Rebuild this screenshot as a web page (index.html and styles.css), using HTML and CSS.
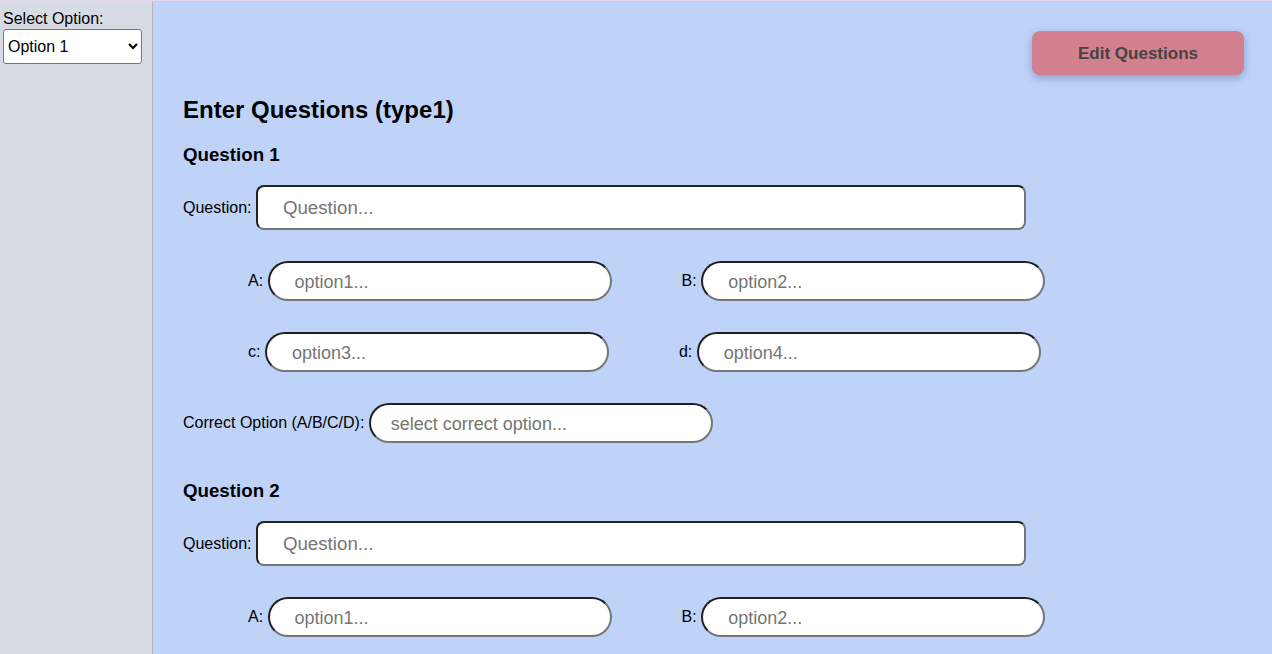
FILE: index.html
```html
<!DOCTYPE html>
<html>
<head>
<meta charset="utf-8">
<title>Questions</title>
<link rel="stylesheet" href="styles.css">
</head>
<body>
<div class="app">
  <aside class="sidebar">
    <label class="side-label" for="opt">Select Option:</label>
    <select id="opt" class="side-select">
      <option>Option 1</option>
      <option>Option 2</option>
    </select>
  </aside>
  <main class="main">
    <div class="toolbar">
      <button class="edit-btn">Edit Questions</button>
    </div>
    <h2 class="title">Enter Questions (type1)</h2>

    <section class="qblock">
      <h3 class="qhead">Question 1</h3>
      <div class="qrow"><label>Question:</label> <input class="qinput" placeholder="Question..."></div>
      <div class="orow">
        <div class="ogroup"><label>A:</label> <input class="oinput" placeholder="option1..."></div>
        <div class="ogroup"><label>B:</label> <input class="oinput" placeholder="option2..."></div>
      </div>
      <div class="orow">
        <div class="ogroup"><label>c:</label> <input class="oinput" placeholder="option3..."></div>
        <div class="ogroup"><label>d:</label> <input class="oinput" placeholder="option4..."></div>
      </div>
      <div class="crow"><label>Correct Option (A/B/C/D):</label> <input class="cinput" placeholder="select correct option..."></div>
    </section>

    <section class="qblock">
      <h3 class="qhead">Question 2</h3>
      <div class="qrow"><label>Question:</label> <input class="qinput" placeholder="Question..."></div>
      <div class="orow">
        <div class="ogroup"><label>A:</label> <input class="oinput" placeholder="option1..."></div>
        <div class="ogroup"><label>B:</label> <input class="oinput" placeholder="option2..."></div>
      </div>
      <div class="orow">
        <div class="ogroup"><label>c:</label> <input class="oinput" placeholder="option3..."></div>
        <div class="ogroup"><label>d:</label> <input class="oinput" placeholder="option4..."></div>
      </div>
      <div class="crow"><label>Correct Option (A/B/C/D):</label> <input class="cinput" placeholder="select correct option..."></div>
    </section>
  </main>
</div>
</body>
</html>
```

FILE: styles.css
```css
html, body {
  margin: 0;
  padding: 0;
  height: 100%;
  overflow: hidden;
}
body {
  font-family: "Liberation Sans", Arial, sans-serif;
  font-size: 16px;
  color: #000;
  background: #e4d9ec;
}
.app {
  display: flex;
  height: 653px;
  margin-top: 1px;
}
.sidebar {
  width: 149px;
  flex: 0 0 149px;
  background: #d6dbe4;
  border-right: 1px solid #b7b7b7;
  padding: 9px 0 0 3px;
  display: flex;
  flex-direction: column;
  align-items: flex-start;
}
.side-label {
  display: block;
  line-height: 18.4px;
  height: 19px;
}
.side-select {
  width: 139px;
  height: 35px;
  font-family: "Liberation Sans", Arial, sans-serif;
  font-size: 16px;
  color: #000;
  background: #fff;
  border: 1px solid #767676;
  border-radius: 3px;
  padding: 0;
}
.main {
  flex: 1;
  background: #bfd3f9;
  padding: 30px 28px 0 30px;
  overflow: hidden;
}
.toolbar {
  display: flex;
  justify-content: flex-end;
}
.edit-btn {
  width: 212px;
  height: 44px;
  border: none;
  border-radius: 8px;
  background: #d27f8f;
  color: #444;
  font-family: "Liberation Sans", Arial, sans-serif;
  font-weight: bold;
  font-size: 17px;
  padding: 2px 0 0;
  box-shadow: 0 3px 8px rgba(40, 60, 110, 0.35);
}
.title {
  margin: 21px 0 20px;
  font-size: 24px;
  line-height: 28px;
  font-weight: bold;
}
.qblock {
  margin-bottom: 37px;
}
.qhead {
  margin: 0 0 19px;
  font-size: 18.72px;
  line-height: 22px;
  font-weight: bold;
}
.qrow, .crow {
  display: flex;
  align-items: center;
  gap: 4.45px;
}
.qrow {
  margin-bottom: 31px;
}
.orow {
  display: flex;
  align-items: center;
  gap: 70px;
  padding-left: 65px;
  margin-bottom: 31px;
}
.ogroup {
  display: flex;
  align-items: center;
  gap: 4.45px;
}
input {
  font-family: "Liberation Sans", Arial, sans-serif;
  font-size: 18px;
  color: #000;
  background: #fff;
  border-style: solid;
  border-width: 2px;
  border-color: #202020 #767676 #767676 #202020;
  box-sizing: border-box;
  outline: none;
  margin: 0;
  flex-shrink: 0;
}
input::placeholder {
  color: #757575;
}
.qinput {
  width: 770px;
  height: 45px;
  border-radius: 8px;
  font-size: 18.72px;
  padding: 0 25px;
}
.oinput {
  width: 344px;
  height: 40px;
  border-radius: 20px;
  padding: 2px 25px 0;
}
.cinput {
  width: 344px;
  height: 40px;
  border-radius: 20px;
  padding: 2px 20px 0;
}
```
